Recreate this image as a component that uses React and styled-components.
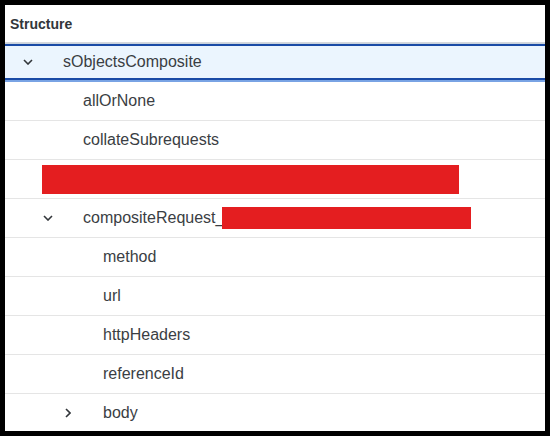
import React from "react";
import styled, { createGlobalStyle } from "styled-components";

const GlobalStyle = createGlobalStyle`
    html, body {
        margin: 0;
        padding: 0;
        background: #000000;
    }
    body {
        font-family: "Liberation Sans", Arial, sans-serif;
        color: #32363a;
    }
`;

const rows = [
    { level: 0, label: "sObjectsComposite", toggle: "down", selected: true },
    { level: 1, label: "allOrNone" },
    { level: 1, label: "collateSubrequests" },
    { redacted: { left: 37, width: 417, height: 29 } },
    { level: 1, label: "compositeRequest_", toggle: "down", tail: { width: 249, height: 22 } },
    { level: 2, label: "method" },
    { level: 2, label: "url" },
    { level: 2, label: "httpHeaders" },
    { level: 2, label: "referenceId" },
    { level: 2, label: "body", toggle: "right" },
];

function Chevron({ dir }) {
    if (dir === "right") {
        return (
            <svg width="6" height="10" viewBox="0 0 6 10">
                <path d="M1 1 L5 5 L1 9" fill="none" stroke="#32363a" strokeWidth="1.6" />
            </svg>
        );
    }
    return (
        <svg width="10" height="6" viewBox="0 0 10 6">
            <path d="M1 1 L5 5 L9 1" fill="none" stroke="#32363a" strokeWidth="1.6" />
        </svg>
    );
}

function App() {
    return (
        <>
            <GlobalStyle />
            <Panel>
                <Header>Structure</Header>
                {rows.map((row, i) =>
                    row.redacted ? (
                        <Row key={i}>
                            <Redacted $left={row.redacted.left} $width={row.redacted.width} $height={row.redacted.height} />
                        </Row>
                    ) : row.selected ? (
                        <SelectedRow key={i} $level={row.level}>
                            <Toggle>{row.toggle && <Chevron dir={row.toggle} />}</Toggle>
                            <Label>{row.label}</Label>
                        </SelectedRow>
                    ) : (
                        <Row key={i} $level={row.level}>
                            <Toggle>{row.toggle && <Chevron dir={row.toggle} />}</Toggle>
                            <Label>{row.label}</Label>
                            {row.tail && <Redacted $width={row.tail.width} $height={row.tail.height} />}
                        </Row>
                    )
                )}
            </Panel>
        </>
    );
}

const Panel = styled.div`
    margin: 5px;
    width: 540px;
    height: 426px;
    background: #ffffff;
    overflow: hidden;
`;

const Header = styled.div`
    height: 37px;
    display: flex;
    align-items: center;
    padding-left: 5px;
    font-size: 14px;
    font-weight: bold;
    color: #32363a;
    border-bottom: 1px solid #d5d8dc;
`;

const Row = styled.div`
    height: 38px;
    display: flex;
    align-items: center;
    padding-left: ${(p) => 13 + (p.$level || 0) * 20}px;
    border-bottom: 1px solid #e5e5e5;
`;

const SelectedRow = styled(Row)`
    height: 32px;
    border-top: 1px solid #c9d3dd;
    box-shadow: inset 0 2px 0 #1a4ba6;
    padding-top: 2px;
    background: #ebf5fe;
    border-bottom: 2px solid #1a4ba6;
    margin-bottom: 2px;
    position: relative;

    &::after {
        content: "";
        position: absolute;
        left: 0;
        right: 0;
        bottom: -4px;
        height: 2px;
        background: #79a3e4;
    }
`;

const Toggle = styled.span`
    width: 20px;
    height: 20px;
    display: flex;
    align-items: center;
    justify-content: center;
    flex-shrink: 0;
    margin-right: 25px;
`;

const Label = styled.span`
    font-size: 16px;
    color: #3a3e43;
    white-space: nowrap;
`;

const Redacted = styled.span`
    display: block;
    margin-left: ${(p) => (p.$left ? p.$left - 13 : -2)}px;
    width: ${(p) => p.$width}px;
    height: ${(p) => p.$height}px;
    background: #e41e20;
`;

export default App;
